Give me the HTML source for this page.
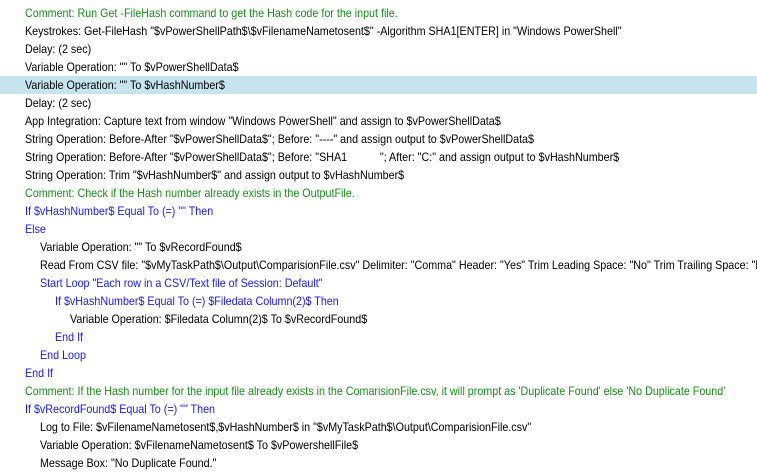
<!DOCTYPE html>
<html><head><style>
body{margin:0;width:757px;height:474px;overflow:hidden;background:#fff;font-family:"Liberation Sans",sans-serif;font-size:12px;}
.r{position:absolute;left:0;width:757px;height:18px;line-height:18px;white-space:nowrap;color:#000;overflow:hidden;box-sizing:border-box;}
.r span{display:inline-block;transform:scaleX(.894);transform-origin:0 50%;}
.g{color:#17901a}.b{color:#1a1aff}
.h{background:#c6e4ee}
</style></head><body>
<div style="position:relative">
<div class="r g" style="top:4px;padding-left:25px"><span>Comment: Run Get -FileHash command to get the Hash code for the input file.</span></div>
<div class="r" style="top:22px;padding-left:25px"><span>Keystrokes: Get-FileHash "$vPowerShellPath$\$vFilenameNametosent$" -Algorithm SHA1[ENTER] in "Windows PowerShell"</span></div>
<div class="r" style="top:40px;padding-left:25px"><span>Delay: (2 sec)</span></div>
<div class="r" style="top:58px;padding-left:25px"><span>Variable Operation: "" To $vPowerShellData$</span></div>
<div class="r h" style="top:76px;padding-left:25px"><span>Variable Operation: "" To $vHashNumber$</span></div>
<div class="r" style="top:94px;padding-left:25px"><span>Delay: (2 sec)</span></div>
<div class="r" style="top:112px;padding-left:25px"><span>App Integration: Capture text from window "Windows PowerShell" and assign to $vPowerShellData$</span></div>
<div class="r" style="top:130px;padding-left:25px"><span>String Operation: Before-After "$vPowerShellData$"; Before: "----" and assign output to $vPowerShellData$</span></div>
<div class="r" style="top:148px;padding-left:25px"><span>String Operation: Before-After "$vPowerShellData$"; Before: "SHA1&nbsp;&nbsp;&nbsp;&nbsp;&nbsp;&nbsp;&nbsp;&nbsp;&nbsp;&nbsp;&nbsp;"; After: "C:" and assign output to $vHashNumber$</span></div>
<div class="r" style="top:166px;padding-left:25px"><span>String Operation: Trim "$vHashNumber$" and assign output to $vHashNumber$</span></div>
<div class="r g" style="top:184px;padding-left:25px"><span>Comment: Check if the Hash number already exists in the OutputFile.</span></div>
<div class="r b" style="top:202px;padding-left:25px"><span>If $vHashNumber$ Equal To (=) "" Then</span></div>
<div class="r b" style="top:220px;padding-left:25px"><span>Else</span></div>
<div class="r" style="top:238px;padding-left:40px"><span>Variable Operation: "" To $vRecordFound$</span></div>
<div class="r" style="top:256px;padding-left:40px"><span>Read From CSV file: "$vMyTaskPath$\Output\ComparisionFile.csv" Delimiter: "Comma" Header: "Yes" Trim Leading Space: "No" Trim Trailing Space: "No"</span></div>
<div class="r b" style="top:274px;padding-left:40px"><span>Start Loop "Each row in a CSV/Text file of Session: Default"</span></div>
<div class="r b" style="top:292px;padding-left:55px"><span>If $vHashNumber$ Equal To (=) $Filedata Column(2)$ Then</span></div>
<div class="r" style="top:310px;padding-left:70px"><span>Variable Operation: $Filedata Column(2)$ To $vRecordFound$</span></div>
<div class="r b" style="top:328px;padding-left:55px"><span>End If</span></div>
<div class="r b" style="top:346px;padding-left:40px"><span>End Loop</span></div>
<div class="r b" style="top:364px;padding-left:25px"><span>End If</span></div>
<div class="r g" style="top:382px;padding-left:25px"><span>Comment: If the Hash number for the input file already exists in the ComarisionFile.csv, it will prompt as 'Duplicate Found' else 'No Duplicate Found'</span></div>
<div class="r b" style="top:400px;padding-left:25px"><span>If $vRecordFound$ Equal To (=) "" Then</span></div>
<div class="r" style="top:418px;padding-left:40px"><span>Log to File: $vFilenameNametosent$,$vHashNumber$ in "$vMyTaskPath$\Output\ComparisionFile.csv"</span></div>
<div class="r" style="top:436px;padding-left:40px"><span>Variable Operation: $vFilenameNametosent$ To $vPowershellFile$</span></div>
<div class="r" style="top:454px;padding-left:40px"><span>Message Box: "No Duplicate Found."</span></div>
</div>
</body></html>
